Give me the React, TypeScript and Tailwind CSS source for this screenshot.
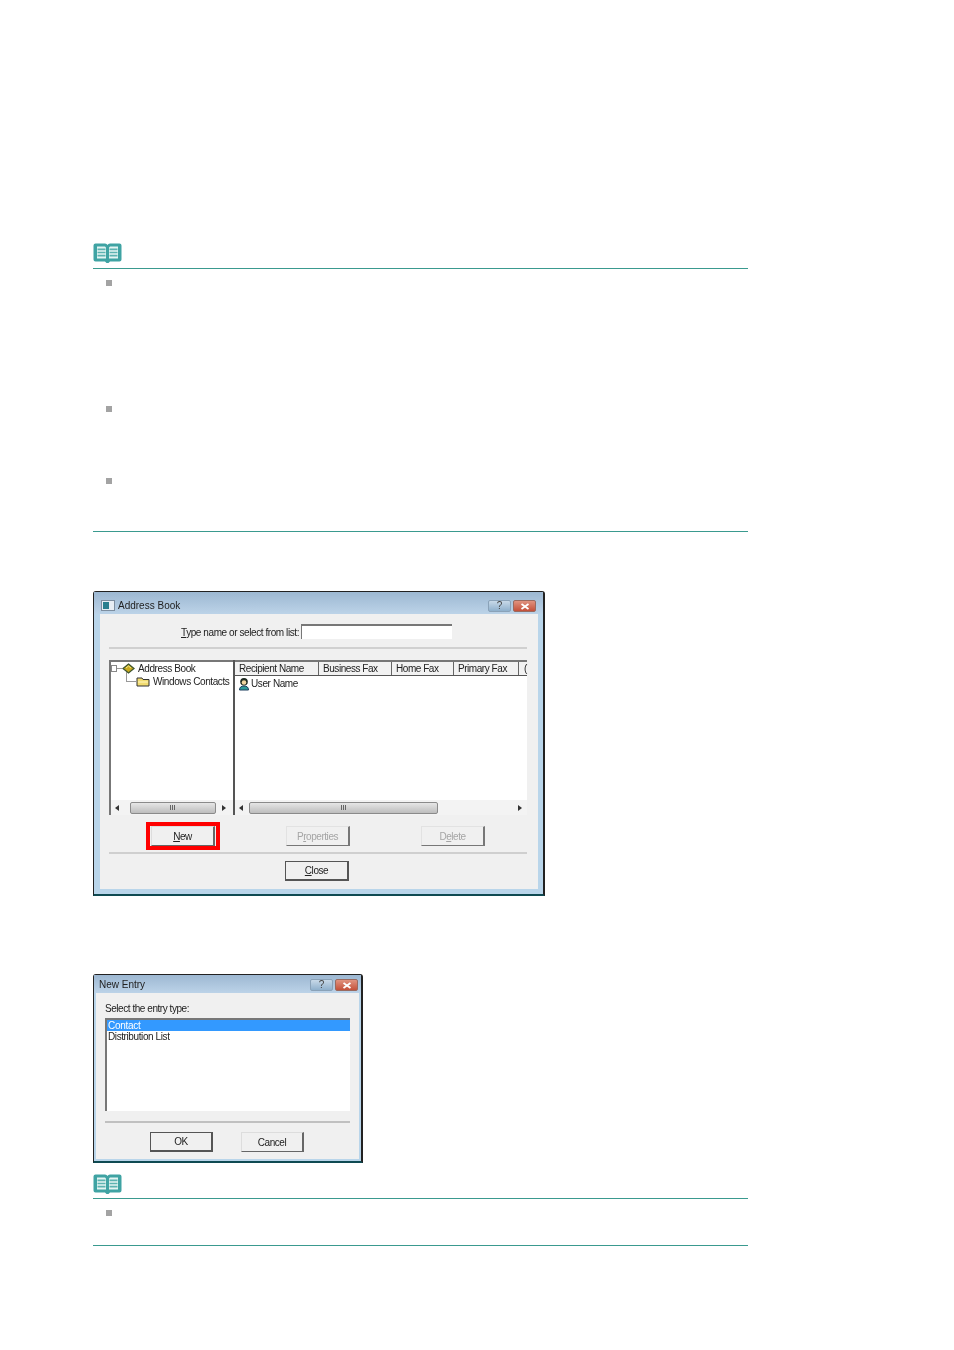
import React from "react";

const font = { fontFamily: '"Liberation Sans", Arial, sans-serif' };

function NoteIcon() {
  return (
    <svg width="29" height="20" viewBox="0 0 29 20" className="block">
      <path d="M0.500 2.500 Q0.500 0.500 2.500 0.500 H12 Q14 0.500 14.500 2 Q15 0.500 17 0.500 H26.500 Q28.500 0.500 28.500 2.500 V16.500 Q28.500 18.500 26.500 18.500 H17 L15.500 20 H13.500 L12 18.500 H2.500 Q0.500 18.500 0.500 16.500 Z" fill="#3fa3a3" />
      <path d="M4 3.500 H12 Q13 4 13 5 V15.500 H4 Z M16 5 Q16 4 17 3.500 H25 V15.500 H16 Z" fill="#e4f5f3" />
      <path d="M4.500 6.300 H12.500 M4.500 9.500 H12.500 M4.500 12.700 H12.500 M16.500 6.300 H24.500 M16.500 9.500 H24.500 M16.500 12.700 H24.500" stroke="#5db3b1" strokeWidth="1.700" fill="none" />
    </svg>
  );
}

function Bullet() {
  return <div className="w-[6px] h-[6px] bg-[#a3a3a3]" />;
}

function WinBtn({ kind }: { kind: "help" | "close" }) {
  return kind === "help" ? (
    <div className="h-[12px] w-[23px] rounded-[2px] border border-[#8aa2b8] bg-gradient-to-b from-[#c8d9e8] to-[#8fb0cc] flex items-center justify-center text-[10px] leading-none text-[#444]">?</div>
  ) : (
    <div className="h-[12px] w-[23px] rounded-[2px] border border-[#9a6a60] bg-gradient-to-b from-[#e0927f] to-[#c4503a] flex items-center justify-center">
      <svg width="10" height="7" viewBox="0 0 10 7"><path d="M1.500 1 L8.500 6 M8.500 1 L1.500 6" stroke="#fff" strokeWidth="1.800" /></svg>
    </div>
  );
}

function Btn({ children, w = 64, disabled, strong }: { children: React.ReactNode; w?: number; disabled?: boolean; strong?: boolean }) {
  const cls = strong
    ? "border border-[#555] border-r-2 border-b-2"
    : disabled
    ? "border border-[#e2e2e2] border-r-[#777] border-b-[#777] border-r-2"
    : "border border-[#ddd] border-r-[#666] border-b-[#666] border-r-2";
  return (
    <div className={`h-[20px] flex items-center justify-center text-[10px] tracking-[-0.45px] bg-[#f0f0f0] ${cls} ${disabled ? "text-[#a5a5a5]" : "text-[#222]"}`} style={{ width: w }}>
      {children}
    </div>
  );
}

function Arrow({ dir }: { dir: "l" | "r" }) {
  return (
    <svg width="4" height="6" viewBox="0 0 4 6" className="shrink-0">
      <path d={dir === "l" ? "M4 0 V6 L0 3 Z" : "M0 0 V6 L4 3 Z"} fill="#333" />
    </svg>
  );
}

function Thumb({ w }: { w: number }) {
  return (
    <div className="h-[12px] rounded-[2px] border border-[#8a8a8a] bg-gradient-to-b from-[#e6e6e6] to-[#bdbdbd] flex items-center justify-center" style={{ width: w }}>
      <div className="w-[6px] h-[5px] bg-[repeating-linear-gradient(90deg,#666_0,#666_1px,transparent_1px,transparent_2px)]" />
    </div>
  );
}

function AddressBook() {
  const cols: [string, number][] = [["Recipient Name", 84], ["Business Fax", 73], ["Home Fax", 62], ["Primary Fax", 65]];
  return (
    <div className="w-[452px] h-[305px] border border-[#222] border-b-2 border-r-2 border-b-[#0f4a52] rounded-t-[3px] bg-[#b9d5ea] flex flex-col blur-[0.4px]">
      <div className="h-[22px] shrink-0 bg-gradient-to-b from-[#9db8d2] to-[#bcd3e8] flex items-start pt-[7px] pl-[7px] pr-[7px]">
        <div className="w-[14px] h-[11px] mt-[1px] bg-[#e8eef4] border border-[#7d8ea0] flex items-center pl-[1px]"><div className="w-[6px] h-[7px] bg-[#2a7f8f]" /></div>
        <span className="ml-[3px] text-[10px] leading-[13px] text-[#222]">Address Book</span>
        <div className="ml-auto flex gap-[2px] mt-[1px]"><WinBtn kind="help" /><WinBtn kind="close" /></div>
      </div>
      <div className="flex-1 ml-[6px] mr-[5px] mb-[5px] bg-[#f0f0f0] flex flex-col pl-[9px] pr-[11px]">
        <div className="flex items-center h-[15px] mt-[10px] pl-[72px]">
          <span className="text-[10px] pt-[2px] text-[#222] w-[120px] whitespace-nowrap tracking-[-0.42px]"><u>T</u>ype name or select from list:</span>
          <div className="w-[151px] h-[15px] bg-white border-t-2 border-l border-[#777]" />
        </div>
        <div className="h-[2px] bg-[#d0d0d0] mt-[8px]" />
        <div className="flex mt-[11px] h-[155px]">
          <div className="w-[124px] border-l-2 border-t-2 border-[#777] bg-white flex flex-col">
            <div className="flex-1 relative text-[10px] text-[#222]">
              <div className="flex items-center h-[12px]">
                <div className="w-[6px] h-[7px] border border-[#888]" />
                <div className="w-[5px] h-px bg-[#999]" />
                <svg width="13" height="11" viewBox="0 0 13 11">
                  <path d="M6.500 1 L12 5.500 L6.500 10 L1 5.500 Z" fill="#c9ab1f" stroke="#3f5530" strokeWidth="1.300" />
                  <path d="M4 5 L6.500 3 L9 5" stroke="#f5e98a" fill="none" />
                </svg>
                <span className="ml-[3px] tracking-[-0.4px]">Address Book</span>
              </div>
              <div className="flex items-center h-[14px] pl-[15px]">
                <div className="w-[10px] h-[10px] -mt-[9px] border-l border-b border-[#999]" />
                <svg width="14" height="11" viewBox="0 0 14 11">
                  <path d="M1 2 H6 L7 3.500 H13 V10 H1 Z" fill="#f2dc70" stroke="#333" />
                  <path d="M2 6 H12" stroke="#fff6c0" />
                </svg>
                <span className="ml-[3px] tracking-[-0.4px] whitespace-nowrap">Windows Contacts</span>
              </div>
            </div>
            <div className="h-[15px] bg-[#f3f3f3] flex items-center pl-[4px]">
              <Arrow dir="l" />
              <div className="ml-[11px]"><Thumb w={86} /></div>
              <div className="ml-[6px]"><Arrow dir="r" /></div>
            </div>
          </div>
          <div className="w-[294px] border-l-2 border-[#555] bg-white flex flex-col">
            <div className="flex h-[16px] border-t-2 border-[#777] border-b border-b-[#555] bg-[#f2f2f2] text-[10px] text-[#222]">
              {cols.map(([c, w]) => (
                <div key={c} className="h-full pl-[4px] border-r border-[#666] whitespace-nowrap tracking-[-0.45px] leading-[14px] shrink-0" style={{ width: w }}>{c}</div>
              ))}
              <div className="h-full pl-[5px] leading-[14px]">(</div>
            </div>
            <div className="flex-1 pl-[3px]">
              <div className="flex items-center text-[10px] text-[#222]">
                <svg width="12" height="14" viewBox="0 0 12 14">
                  <path d="M1.500 13 Q1.500 9 6 9 Q10.500 9 10.500 13 Z" fill="#2e9c9a" stroke="#1a3d5c" />
                  <circle cx="6" cy="4.800" r="3.800" fill="#1e2a20" />
                  <circle cx="6" cy="5.500" r="2.300" fill="#f1d6a0" />
                </svg>
                <span className="ml-[1px] tracking-[-0.4px]">User Name</span>
              </div>
            </div>
            <div className="h-[15px] bg-[#f3f3f3] flex items-center pl-[4px] pr-[5px]">
              <Arrow dir="l" />
              <div className="ml-[6px]"><Thumb w={189} /></div>
              <div className="ml-auto"><Arrow dir="r" /></div>
            </div>
          </div>
        </div>
        <div className="flex mt-[10px] h-[22px] items-center pl-[37px]">
          <div className="w-[74px] h-[28px] shrink-0 border-[4px] border-[#ff0000] flex items-center justify-center">
            <Btn w={64}><span><u>N</u>ew</span></Btn>
          </div>
          <div className="ml-[66px]"><Btn disabled><span>P<u>r</u>operties</span></Btn></div>
          <div className="ml-[71px]"><Btn disabled><span>D<u>e</u>lete</span></Btn></div>
        </div>
        <div className="h-[2px] bg-[#cfcfcf] mt-[5px]" />
        <div className="flex justify-center mt-[7px] pr-[2px]">
          <Btn strong w={64}><span><u>C</u>lose</span></Btn>
        </div>
      </div>
    </div>
  );
}

function NewEntry() {
  return (
    <div className="w-[270px] h-[189px] border border-[#222] border-b-2 border-r-2 border-b-[#0f4a52] rounded-t-[3px] bg-[#b9d5ea] flex flex-col blur-[0.4px]">
      <div className="h-[18px] shrink-0 bg-gradient-to-b from-[#9db8d2] to-[#bcd3e8] flex items-start pt-[4px] pl-[5px] pr-[3px]">
        <span className="text-[10px] leading-[13px] -mt-[1px] text-[#222]">New Entry</span>
        <div className="ml-auto flex gap-[2px]"><WinBtn kind="help" /><WinBtn kind="close" /></div>
      </div>
      <div className="flex-1 mx-[2px] mb-[2px] bg-[#f0f0f0] flex flex-col px-[9px]">
        <div className="text-[10px] text-[#222] leading-[14px] mt-[9px] tracking-[-0.45px]">Select the entry type:</div>
        <div className="h-[93px] mt-[2px] bg-white border-l-2 border-t-2 border-[#777]">
          <div className="h-[11px] bg-[#3399ff] text-white text-[10px] leading-[11px] pl-[1px] tracking-[-0.3px]">Contact</div>
          <div className="text-[10px] leading-[11px] text-[#222] pl-[1px] tracking-[-0.4px]">Distribution List</div>
        </div>
        <div className="h-[2px] bg-[#c0c0c0] mt-[10px]" />
        <div className="flex mt-[9px] pl-[45px] gap-[28px]">
          <Btn strong w={63}>OK</Btn>
          <Btn w={63}>Cancel</Btn>
        </div>
      </div>
    </div>
  );
}

export default function App() {
  return (
    <div className="w-[954px] h-[1350px] bg-white pl-[93px] overflow-hidden" style={font}>
      <div className="w-[655px] pt-[243px]">
        <NoteIcon />
        <div className="h-px bg-[#3a9a8f] mt-[5px]" />
        <div className="pl-[13px]">
          <div className="mt-[11px]"><Bullet /></div>
          <div className="mt-[120px]"><Bullet /></div>
          <div className="mt-[66px]"><Bullet /></div>
        </div>
        <div className="h-px bg-[#3a9a8f] mt-[47px]" />
        <div className="mt-[59px]"><AddressBook /></div>
        <div className="mt-[78px]"><NewEntry /></div>
        <div className="mt-[11px]"><NoteIcon /></div>
        <div className="h-px bg-[#3a9a8f] mt-[4px]" />
        <div className="pl-[13px] mt-[11px]"><Bullet /></div>
        <div className="h-px bg-[#3a9a8f] mt-[29px]" />
      </div>
    </div>
  );
}
